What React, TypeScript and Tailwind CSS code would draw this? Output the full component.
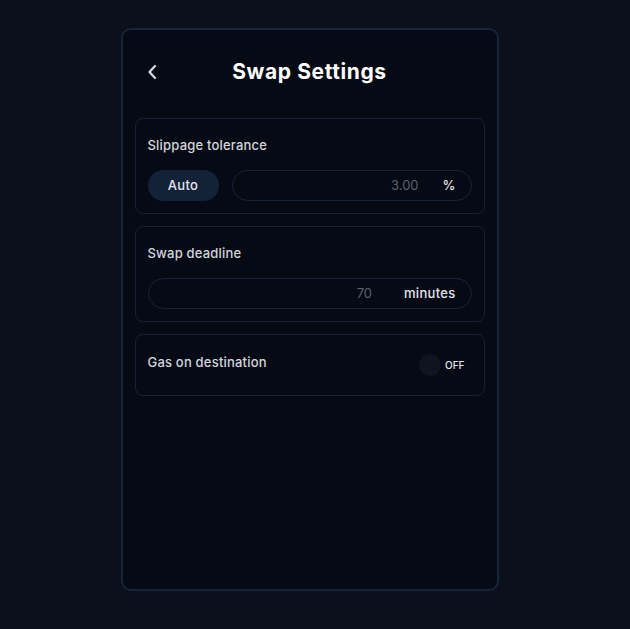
import React, { useState } from 'react';

const font = { fontFamily: 'Inter, "Noto Sans", sans-serif' };

const SwapSettings = () => {
  const [slippage, setSlippage] = useState('');
  const [deadline, setDeadline] = useState('');
  const [gas, setGas] = useState(false);

  return (
    <div className="min-h-[629px] w-full bg-[#0b101a] flex justify-center pt-[28px] pr-[11px]" style={font}>
      <div className="w-[378px] h-[563px] bg-[#050a14] border-2 border-[#18243a] rounded-[10px] px-[12px]">
        <div className="relative h-[88px] flex items-center justify-center">
          <button className="absolute left-[11px] top-[33px] text-[#d6d9e0]">
            <svg width="12" height="18" viewBox="0 0 12 18" fill="none">
              <path d="M9 3L3.5 9L9 15" stroke="currentColor" strokeWidth="2.2" strokeLinecap="round" strokeLinejoin="round" />
            </svg>
          </button>
          <h1 className="text-[21px] font-bold text-white tracking-[0.6px] mt-[-4px]">Swap Settings</h1>
        </div>

        <div className="flex flex-col gap-[12px]">
          <div className="border border-[#172236] rounded-[8px] px-[12px] pt-[17px] pb-[12px]">
            <div className="text-[13px] font-medium text-[#d3d6dd] tracking-[0.2px] leading-[18px]">Slippage tolerance</div>
            <div className="flex gap-[13px] mt-[16px]">
              <button className="w-[71px] shrink-0 h-[31px] rounded-full bg-[#142238] text-[13px] font-medium text-[#e3e6ec] tracking-[0.3px]">Auto</button>
              <div className="flex-1 min-w-0 h-[31px] rounded-full border border-[#18243a] flex items-center pr-[15px]">
                <input
                  value={slippage}
                  onChange={(e) => setSlippage(e.target.value)}
                  placeholder="3.00"
                  className="flex-1 min-w-0 bg-transparent text-right text-[13px] text-[#e3e6ec] placeholder-[#5b6270] outline-none pr-[24px]"
                />
                <span className="text-[13px] font-medium text-[#e3e6ec]">%</span>
              </div>
            </div>
          </div>

          <div className="border border-[#172236] rounded-[8px] px-[12px] pt-[17px] pb-[12px]">
            <div className="text-[13px] font-medium text-[#d3d6dd] tracking-[0.2px] leading-[18px]">Swap deadline</div>
            <div className="mt-[16px] h-[31px] rounded-full border border-[#18243a] flex items-center pr-[15px]">
              <input
                value={deadline}
                onChange={(e) => setDeadline(e.target.value)}
                placeholder="70"
                className="flex-1 min-w-0 bg-transparent text-right text-[13px] text-[#e3e6ec] placeholder-[#5b6270] outline-none pr-[32px]"
              />
              <span className="text-[13px] font-medium text-[#e3e6ec] tracking-[0.3px]">minutes</span>
            </div>
          </div>

          <div className="border border-[#172236] rounded-[8px] px-[12px] h-[62px] flex items-center justify-between">
            <div className="text-[13px] font-medium text-[#d3d6dd] tracking-[0.2px] mt-[-4px]">Gas on destination</div>
            <button onClick={() => setGas(!gas)} className="flex items-center gap-[4px] mr-[7px]">
              <span className="w-[22px] h-[22px] rounded-full bg-[#0f1520]" />
              <span className="text-[10px] font-medium text-[#e3e6ec]">{gas ? 'ON' : 'OFF'}</span>
            </button>
          </div>
        </div>
      </div>
    </div>
  );
};

export default function App() {
  return <SwapSettings />;
}
